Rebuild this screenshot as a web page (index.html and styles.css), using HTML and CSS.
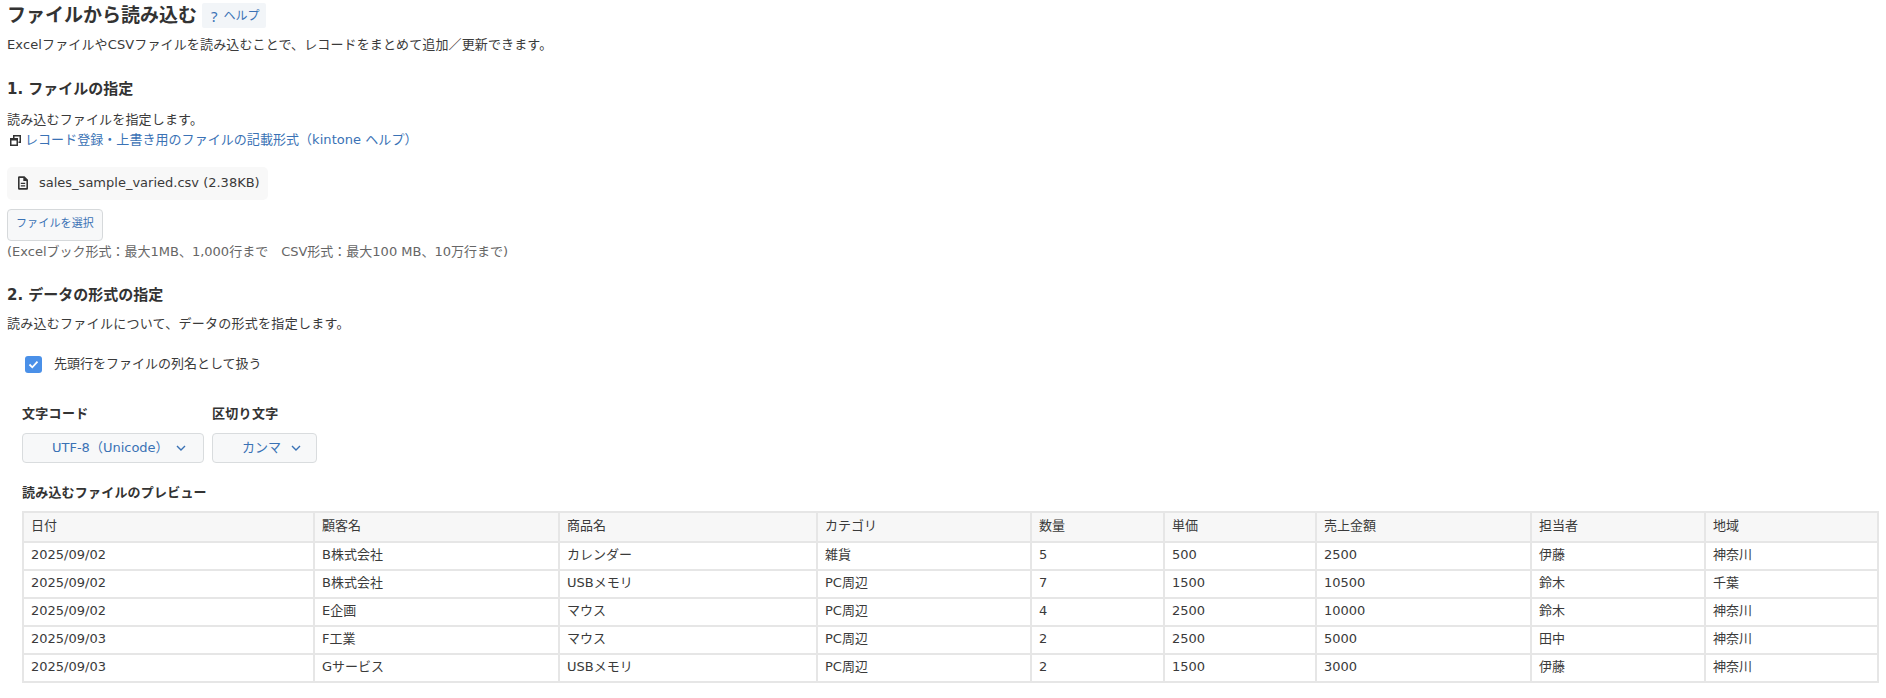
FILE: index.html
```html
<!DOCTYPE html>
<html lang="ja">
<head>
<meta charset="utf-8">
<title>ファイルから読み込む</title>
<link rel="stylesheet" href="styles.css">
</head>
<body>
<main class="page">
  <header class="title-row">
    <h1 class="title">ファイルから読み込む</h1>
    <a class="help-chip"><span class="help-mark">?</span><span>ヘルプ</span></a>
  </header>
  <p class="lead">ExcelファイルやCSVファイルを読み込むことで、レコードをまとめて追加／更新できます。</p>

  <h2 class="section-title first">1. ファイルの指定</h2>
  <p class="text">読み込むファイルを指定します。</p>
  <p class="link-row">
    <svg class="link-icon" width="11" height="11" viewBox="0 0 11 11"><path d="M3 0h8v8H8.500V6.500H9.500v-5H4.500V3H3z" fill="#333"/><path fill-rule="evenodd" d="M0 3h8v8H0zM1.500 5.500v4h5v-4z" fill="#333"/></svg>
    <a class="link">レコード登録・上書き用のファイルの記載形式（kintone ヘルプ）</a>
  </p>
  <div class="file-chip">
    <svg width="12" height="14" viewBox="0 0 12 14"><path fill-rule="evenodd" d="M1 1.500A1.200 1.200 0 0 1 2.200.3H7.500L11 3.800v8.700a1.200 1.200 0 0 1-1.200 1.200H2.200A1.200 1.200 0 0 1 1 12.500zM2.600 1.900v10.200h6.800V5H6.300V1.900z" fill="#333"/><path d="M3.800 6.800h4.400v1.300H3.800zM3.800 9.300h4.400v1.300H3.800z" fill="#333"/></svg>
    <span>sales_sample_varied.csv (2.38KB)</span>
  </div>
  <button class="file-button">ファイルを選択</button>
  <p class="note">(Excelブック形式：最大1MB、1,000行まで　CSV形式：最大100 MB、10万行まで)</p>

  <h2 class="section-title second">2. データの形式の指定</h2>
  <p class="text text-wide">読み込むファイルについて、データの形式を指定します。</p>

  <label class="check-row">
    <span class="check-box"><svg width="11" height="9" viewBox="0 0 11 9"><path d="M1.500 4.500l2.800 2.800 5.200-5.600" fill="none" stroke="#fff" stroke-width="1.800"/></svg></span>
    <span>先頭行をファイルの列名として扱う</span>
  </label>

  <div class="selects">
    <div class="field">
      <div class="field-label">文字コード</div>
      <div class="select select-wide"><span>UTF-8（Unicode）</span><svg class="chev" width="10" height="6" viewBox="0 0 10 6"><path d="M1 1l4 4 4-4" fill="none" stroke="#3a72b5" stroke-width="1.400"/></svg></div>
    </div>
    <div class="field">
      <div class="field-label">区切り文字</div>
      <div class="select select-narrow"><span>カンマ</span><svg class="chev" width="10" height="6" viewBox="0 0 10 6"><path d="M1 1l4 4 4-4" fill="none" stroke="#3a72b5" stroke-width="1.400"/></svg></div>
    </div>
  </div>

  <h3 class="preview-title">読み込むファイルのプレビュー</h3>
  <table class="preview">
    <thead>
      <tr><th>日付</th><th>顧客名</th><th>商品名</th><th>カテゴリ</th><th>数量</th><th>単価</th><th>売上金額</th><th>担当者</th><th>地域</th></tr>
    </thead>
    <tbody>
      <tr><td>2025/09/02</td><td>B株式会社</td><td>カレンダー</td><td>雑貨</td><td>5</td><td>500</td><td>2500</td><td>伊藤</td><td>神奈川</td></tr>
      <tr><td>2025/09/02</td><td>B株式会社</td><td>USBメモリ</td><td>PC周辺</td><td>7</td><td>1500</td><td>10500</td><td>鈴木</td><td>千葉</td></tr>
      <tr><td>2025/09/02</td><td>E企画</td><td>マウス</td><td>PC周辺</td><td>4</td><td>2500</td><td>10000</td><td>鈴木</td><td>神奈川</td></tr>
      <tr><td>2025/09/03</td><td>F工業</td><td>マウス</td><td>PC周辺</td><td>2</td><td>2500</td><td>5000</td><td>田中</td><td>神奈川</td></tr>
      <tr><td>2025/09/03</td><td>Gサービス</td><td>USBメモリ</td><td>PC周辺</td><td>2</td><td>1500</td><td>3000</td><td>伊藤</td><td>神奈川</td></tr>
    </tbody>
  </table>
</main>
</body>
</html>
```
FILE: styles.css
```css
* { box-sizing: border-box; }
html, body { margin: 0; padding: 0; background: #fff; }
body {
  color: #3a3a3a;
  font-family: "DejaVu Sans", "Noto Sans CJK JP", sans-serif;
  font-size: 13px;
  line-height: 18px;
  overflow: hidden;
}
.page { padding: 3px 9px 0 7px; }
p, h1, h2, h3 { margin: 0; }
.title-row { display: flex; align-items: center; gap: 5px; height: 25px; }
.title { font-size: 19px; font-weight: 700; line-height: 25px; color: #333; }
.help-chip {
  display: flex; align-items: center; gap: 6px;
  height: 25px; width: 64px; padding-left: 9px;
  background: #f2f5f8; color: #3a72b5; font-size: 12px; border-radius: 2px;
}
.help-mark { font-size: 15px; font-family: "Noto Sans", sans-serif; }
.lead { margin-top: 8px; letter-spacing: .13px; }
.section-title { font-size: 15px; font-weight: 700; line-height: 20px; color: #333; }
.section-title.first { margin-top: 25px; }
.section-title.second { margin-top: 24px; }
.text { margin-top: 12px; letter-spacing: .16px; }
.text-wide { margin-top: 10px; letter-spacing: .27px; }
.link-row { display: flex; align-items: center; gap: 4px; margin-top: 2px; padding-left: 3px; letter-spacing: .05px; }
.link-icon { flex: none; }
.link, .file-button, .select { color: #3a72b5; }
.file-chip {
  display: flex; align-items: center; gap: 10px;
  width: 261px; height: 33px; margin-top: 18px; padding: 0 0 2px 10px;
  background: #f8f8f8; border-radius: 5px;
}
.file-button {
  display: block; width: 96px; height: 32px; margin-top: 9px; padding: 0 0 2px;
  font: inherit; font-size: 11px; letter-spacing: .15px;
  background: #f7f8f9; border: 1px solid #d6d9db; border-radius: 4px;
}
.note { margin-top: 2px; color: #666; }
.check-row { display: flex; align-items: center; gap: 12px; margin: 22px 0 0 18px; height: 18px; }
.check-box {
  display: flex; align-items: center; justify-content: center;
  width: 17px; height: 17px; background: #4a90e8; border-radius: 3px;
}
.selects { display: flex; gap: 8px; margin: 32px 0 0 15px; }
.field-label { font-weight: 700; font-size: 13px; color: #333; letter-spacing: .3px; }
.select {
  display: flex; align-items: center;
  height: 30px; margin-top: 10px; padding-bottom: 1px;
  background: #f7f8f9; border: 1px solid #d9dcde; border-radius: 4px;
}
.select-wide { width: 182px; padding-left: 29px; gap: 7px; }
.select-narrow { width: 105px; padding-left: 29px; gap: 10px; }
.preview-title { margin: 21px 0 0 15px; font-size: 13px; font-weight: 700; line-height: 18px; color: #333; letter-spacing: .2px; }
.preview {
  width: 1855px; margin: 9px 0 0 15px;
  border-collapse: collapse; table-layout: fixed;
}
.preview th, .preview td {
  height: 28px; padding: 0 7px 3px; border: 2px solid #e6e6e6;
  font-weight: 400; text-align: left; white-space: nowrap;
}
.preview th { height: 30px; padding-bottom: 2px; background: #f7f7f7; }
.preview th:nth-child(1) { width: 291px; }
.preview th:nth-child(2) { width: 245px; }
.preview th:nth-child(3) { width: 258px; }
.preview th:nth-child(4) { width: 214px; }
.preview th:nth-child(5) { width: 133px; }
.preview th:nth-child(6) { width: 152px; }
.preview th:nth-child(7) { width: 215px; }
.preview th:nth-child(8) { width: 174px; }
.preview th:nth-child(9) { width: 173px; }
```
